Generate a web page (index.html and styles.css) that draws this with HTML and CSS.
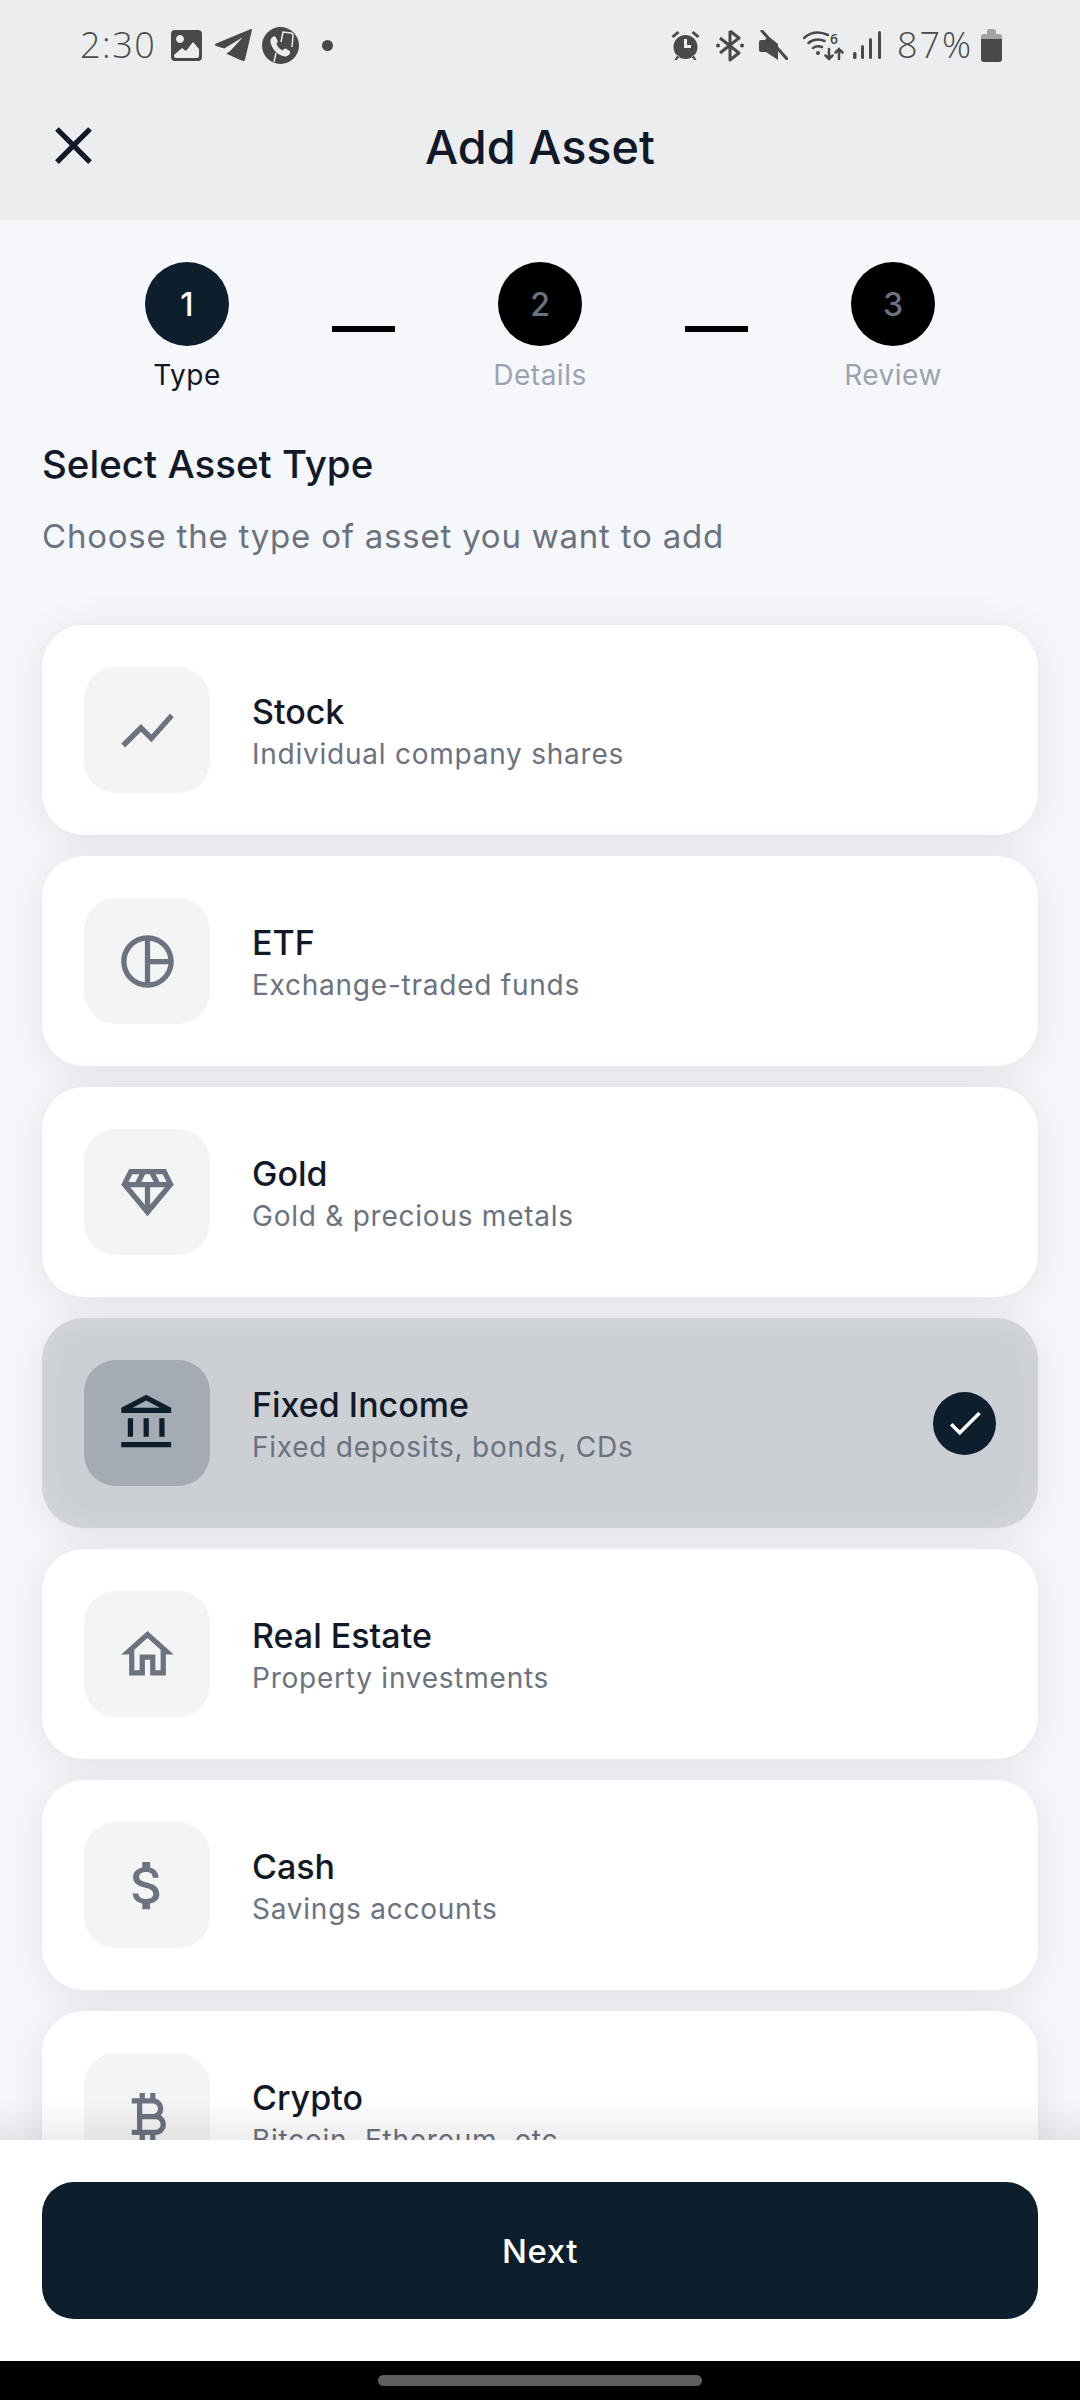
FILE: index.html
```html
<!DOCTYPE html>
<html lang="en">
<head>
<meta charset="utf-8">
<link rel="stylesheet" href="styles.css">
</head>
<body>
<div class="app">
  <header class="top">
    <div class="status">
      <div class="status-left">
        <span class="clock">2:30</span>
        <svg class="si s-img" viewBox="0 0 31 31"><path fill-rule="evenodd" d="M4 0h23a4 4 0 0 1 4 4v23a4 4 0 0 1-4 4H4a4 4 0 0 1-4-4V4a4 4 0 0 1 4-4zM3 26a2 2 0 0 0 2 2h21a2 2 0 0 0 2-2v-7l-6-7-7 9-4-3-8 7zM9 5a4 4 0 1 0 .01 0z"/></svg>
        <svg class="si s-tg" viewBox="0 0 36 31"><path d="M35 0 1 14c-1.500.6-1.300 2 0 2.500L9 19 27 8 15 21l-4 3 16 7c1 .3 2-.2 2.200-1.300L36 1c0-.8-.4-1.200-1-1z"/></svg>
        <svg class="si s-wa" viewBox="0 0 37 37"><circle cx="18.500" cy="18.500" r="18.500"/><path class="cut" d="M11 10c-2.500 1-3 4-2 7 2 6 6 10 12 12 3 1 6 0 7-3 .3-1 0-2-1-2.500l-3.500-2c-1-.5-2 1.500-3 2-3-1.500-5-3.500-6-6.500 0-1 1.500-2 1.200-3l-2-4c-.5-1-1.500-1-2.700-.5z"/><path class="cut-line" d="M19 15l2-10 8 1c2 0 2 2 2 3l-1 11M12 35l2-9"/></svg>
        <span class="dot"></span>
      </div>
      <div class="status-right">
        <svg class="si s-alarm" viewBox="0 0 28 30"><path fill-rule="evenodd" d="M14 5a12 12 0 1 1 0 24 12 12 0 0 1 0-24zm-1.500 4v9h7v-3h-4V9zM0 6l6-5 2 2-6 5zM28 6l-6-5-2 2 6 5zM3 30l3-5 2 2-3 3zM25 30l-3-5-2 2 3 3z"/></svg>
        <svg class="si s-bt" viewBox="0 0 28 33"><path fill="none" stroke="currentColor" stroke-width="3" stroke-linejoin="round" d="M14 2v29l9-7L4 9M14 2l9 7L4 24"/><circle cx="2" cy="16.500" r="2"/><circle cx="26" cy="16.500" r="2"/></svg>
        <svg class="si s-mute" viewBox="0 0 29 30"><path d="M19 1v13L9 6 6 10H2a2 2 0 0 0-2 2v8a2 2 0 0 0 2 2h5l12 8v-8z"/><path fill="none" stroke="currentColor" stroke-width="3" stroke-linecap="round" d="M3 1l25 28"/></svg>
        <span class="wifi">
          <svg class="si s-wifi" viewBox="0 0 41 31"><g fill="none" stroke="currentColor" stroke-width="2.500" stroke-linecap="round"><path d="M1 8c7-6 15-7 24-3M5.500 13c5-4 10-4.500 16-2M10 18c3-2 6-2 9-1"/><path d="M26 19v10M22.500 25.500 26 29l3.500-3.500M36 29V19M32.500 22.500 36 19l3.500 3.500"/></g><circle cx="15" cy="23" r="2"/></svg>
          <span class="net">6</span>
        </span>
        <svg class="si s-sig" viewBox="0 0 28 30"><rect x="0" y="22" width="3.500" height="7" rx="1.500"/><rect x="8" y="15" width="3" height="14" rx="1.500"/><rect x="16" y="8" width="3" height="21" rx="1.500"/><rect x="25" y="1" width="3" height="28" rx="1.500"/></svg>
        <span class="pct">87%</span>
        <svg class="si s-bat" viewBox="0 0 21 33"><path class="bat-top" d="M6 2a2 2 0 0 1 2-2h5a2 2 0 0 1 2 2v3h3a3 3 0 0 1 3 3v2H0V8a3 3 0 0 1 3-3h3z"/><path d="M0 10h21v20a3 3 0 0 1-3 3H3a3 3 0 0 1-3-3z"/></svg>
      </div>
    </div>
    <div class="bar">
      <svg class="close" viewBox="0 0 24 24"><path d="M19 6.410 17.590 5 12 10.590 6.410 5 5 6.410 10.590 12 5 17.590 6.410 19 12 13.410 17.590 19 19 17.590 13.410 12z"/></svg>
      <h1 class="title">Add Asset</h1>
    </div>
  </header>

  <main class="content">
    <section class="stepper">
      <div class="step step-on"><span class="num">1</span><span class="lbl">Type</span></div>
      <span class="link"></span>
      <div class="step"><span class="num">2</span><span class="lbl">Details</span></div>
      <span class="link"></span>
      <div class="step"><span class="num">3</span><span class="lbl">Review</span></div>
    </section>
    <h2 class="heading">Select Asset Type</h2>
    <p class="lead">Choose the type of asset you want to add</p>
    <div class="list">
      <div class="card">
        <div class="ico"><svg viewBox="0 0 24 24"><path d="M3.500 18.490l6-6.010 4 4L22 6.920l-1.410-1.410-7.090 7.970-4-4L2 16.990z"/></svg></div>
        <div class="txt"><div class="name">Stock</div><div class="desc">Individual company shares</div></div>
      </div>
      <div class="card">
        <div class="ico"><svg viewBox="0 0 24 24"><path d="M12 2C6.490 2 2 6.490 2 12s4.490 10 10 10 10-4.490 10-10S17.510 2 12 2zm1 2.070c3.610.45 6.480 3.330 6.930 6.930H13V4.070zM4 12c0-4.060 3.070-7.440 7-7.930v15.870c-3.930-.5-7-3.880-7-7.940zm9 7.930V13h6.930c-.45 3.610-3.320 6.480-6.930 6.930z"/></svg></div>
        <div class="txt"><div class="name">ETF</div><div class="desc">Exchange-traded funds</div></div>
      </div>
      <div class="card">
        <div class="ico"><svg viewBox="0 0 24 24"><path d="M19 3H5L2 9l10 12L22 9l-3-6zM9.620 8l1.500-3h1.760l1.500 3H9.620zM11 10v6.680L5.440 10H11zm2 0h5.560L13 16.680V10zm6.260-2h-2.650l-1.500-3h2.650l1.500 3zM6.240 5h2.650l-1.500 3H4.740l1.500-3z"/></svg></div>
        <div class="txt"><div class="name">Gold</div><div class="desc">Gold &amp; precious metals</div></div>
      </div>
      <div class="card card-on">
        <div class="ico"><svg viewBox="0 0 24 24"><path d="M6.500 10h-2v7h2v-7zm6 0h-2v7h2v-7zm8.500 9H2v2h19v-2zm-2.500-9h-2v7h2v-7zm-7-6.740L16.710 6H6.290l5.210-2.740m0-2.260L2 6v2h19V6l-9.500-5z"/></svg></div>
        <div class="txt"><div class="name">Fixed Income</div><div class="desc">Fixed deposits, bonds, CDs</div></div>
        <span class="tick"><svg viewBox="0 0 24 24"><path d="M9 16.170 4.830 12l-1.410 1.410L9 19 21 7l-1.410-1.410z"/></svg></span>
      </div>
      <div class="card">
        <div class="ico"><svg viewBox="0 0 24 24"><path d="M12 5.690l5 4.500V18h-2v-6H9v6H7v-7.810l5-4.500M12 3 2 12h3v8h6v-6h2v6h6v-8h3L12 3z"/></svg></div>
        <div class="txt"><div class="name">Real Estate</div><div class="desc">Property investments</div></div>
      </div>
      <div class="card">
        <div class="ico"><svg viewBox="0 0 24 24"><path d="M11.800 10.900c-2.270-.59-3-1.200-3-2.150 0-1.090 1.010-1.850 2.700-1.850 1.780 0 2.440.85 2.500 2.100h2.210c-.07-1.720-1.120-3.300-3.210-3.810V3h-3v2.160c-1.940.42-3.500 1.680-3.500 3.610 0 2.310 1.910 3.460 4.700 4.130 2.500.6 3 1.480 3 2.410 0 .69-.49 1.790-2.700 1.790-2.060 0-2.870-.92-2.980-2.100h-2.200c.12 2.190 1.760 3.420 3.680 3.830V21h3v-2.150c1.950-.37 3.500-1.500 3.500-3.550 0-2.840-2.430-3.810-4.700-4.400z"/></svg></div>
        <div class="txt"><div class="name">Cash</div><div class="desc">Savings accounts</div></div>
      </div>
      <div class="card">
        <div class="ico"><svg viewBox="0 0 24 24"><path d="M17.060 11.570c.59-.69.94-1.590.94-2.570 0-1.860-1.270-3.430-3-3.870V3h-2v2h-2V3H9v2H6v2h2v10H6v2h3v2h2v-2h2v2h2v-2c2.210 0 4-1.790 4-4 0-1.450-.78-2.730-1.940-3.430zM10 7h4c1.100 0 2 .9 2 2s-.9 2-2 2h-4V7zm5 10h-5v-4h5c1.100 0 2 .9 2 2s-.9 2-2 2z"/></svg></div>
        <div class="txt"><div class="name">Crypto</div><div class="desc">Bitcoin, Ethereum, etc.</div></div>
      </div>
    </div>
    <div class="fade"></div>
  </main>

  <footer class="foot"><button class="next">Next</button></footer>
  <div class="navbar"><span class="pill"></span></div>
</div>
</body>
</html>
```
FILE: styles.css
```css
* { box-sizing: border-box; margin: 0; padding: 0; }
html, body { width: 1080px; height: 2400px; overflow: hidden; }
body { font-family: Inter, "Noto Sans", sans-serif; background: #000; }
.app { display: flex; flex-direction: column; height: 2400px; }

.top { height: 220px; flex: none; background: #ECEDEF; }
.status { height: 90px; display: flex; justify-content: space-between; align-items: center; color: #484A49; }
.status-left { display: flex; align-items: center; padding-left: 80px; }
.status-right { display: flex; align-items: center; padding-right: 78px; }
.si { display: block; fill: currentColor; flex: none; }
.s-img { width: 31px; height: 31px; margin-left: 19px; }
.s-tg { width: 37px; height: 32px; margin-left: 13px; }
.s-wa { width: 37px; height: 37px; margin-left: 10px; }
.cut { fill: #ECEDEF; }
.cut-line { fill: none; stroke: #ECEDEF; stroke-width: 1.500; }
.s-alarm { width: 29px; height: 30px; }
.s-bt { width: 28px; height: 33px; margin-left: 16px; }
.s-mute { width: 29px; height: 30px; margin-left: 15px; }
.wifi { display: block; position: relative; width: 41px; height: 31px; margin-left: 15px; flex: none; }
.s-wifi { width: 41px; height: 31px; }
.net { position: absolute; left: 27px; top: 1px; font: 600 14px/16px "Open Sans", sans-serif; color: #484A49; }
.s-sig { width: 28px; height: 30px; margin-left: 9px; }
.s-bat { width: 21px; height: 33px; margin-left: 9px; }
.bat-top { opacity: .45; }
.clock, .pct { font-family: "Open Sans", sans-serif; font-weight: 300; font-size: 36px; line-height: 40px; color: #484A49; }
.clock { width: 72px; letter-spacing: 1.500px; }
.pct { width: 75px; margin-left: 16px; letter-spacing: 2px; white-space: nowrap; }
.dot { width: 11px; height: 11px; border-radius: 50%; background: #484A49; margin-left: 23px; }

.bar { height: 130px; display: flex; align-items: center; justify-content: center; position: relative; }
.close { position: absolute; left: 42px; top: 24px; width: 63px; height: 63px; fill: #111827; }
.title { font-size: 46.800px; font-weight: 500; color: #111827; line-height: 56px; margin-top: -16px; }

.content { flex: 1; min-height: 0; overflow: hidden; position: relative; background: #F6F7FB; }
.stepper { display: flex; justify-content: center; align-items: flex-start; padding-top: 42px; }
.step { width: 170px; display: flex; flex-direction: column; align-items: center; }
.num { width: 84px; height: 84px; border-radius: 50%; background: #000; color: #6B7280; display: flex; align-items: center; justify-content: center; font-size: 32px; font-weight: 500; }
.lbl { margin-top: 13px; font-size: 28px; line-height: 32px; color: #9CA3AF; letter-spacing: .5px; }
.step-on .num { background: #0D1E2D; color: #fff; }
.step-on .lbl { color: #111827; }
.link { width: 63px; height: 6px; margin: 64px 60px 0; background: #000; flex: none; }
.heading { margin: 51px 42px 0; font-size: 38.500px; line-height: 44px; font-weight: 500; color: #111827; }
.lead { margin: 30px 42px 0; font-size: 33px; line-height: 40px; color: #6B7280; letter-spacing: .78px; }

.list { display: flex; flex-direction: column; gap: 21px; padding: 0 42px; margin-top: 69px; }
.card { height: 210px; flex: none; display: flex; align-items: center; gap: 42px; padding: 0 42px; border-radius: 42px; background: #fff; box-shadow: 0 5px 40px rgba(0, 0, 0, .09); }
.ico { width: 126px; height: 126px; flex: none; border-radius: 32px; background: #F4F4F5; display: flex; align-items: center; justify-content: center; }
.ico svg { width: 63px; height: 63px; fill: #6B7280; display: block; }
.txt { flex: 1; min-width: 0; padding-top: 2px; }
.name { font-size: 34px; line-height: 42px; font-weight: 500; color: #111827; }
.desc { margin-top: 3px; font-size: 28px; line-height: 36px; color: #6B7280; letter-spacing: .76px; }
.card-on { background: #CCCFD3; box-shadow: 0 5px 40px rgba(0, 0, 0, .09), inset 0 0 30px rgba(255, 255, 255, .2); }
.card-on .ico { background: #A5ABB3; }
.card-on .ico svg { fill: #0D1E2D; }
.tick { width: 63px; height: 63px; border-radius: 50%; background: #0D1E2D; display: flex; align-items: center; justify-content: center; flex: none; }
.tick svg { width: 42px; height: 42px; fill: #fff; display: block; }
.fade { position: absolute; left: 0; right: 0; bottom: 0; height: 40px; background: linear-gradient(rgba(0, 0, 0, 0), rgba(0, 0, 0, .07)); }

.foot { height: 221px; flex: none; background: #fff; padding: 42px; }
.next { display: block; width: 100%; height: 137px; border: 0; border-radius: 32px; background: #0D1E2D; color: #fff; font-family: inherit; font-size: 33px; font-weight: 500; letter-spacing: .5px; }
.navbar { height: 39px; flex: none; background: #000; display: flex; justify-content: center; padding-top: 14px; }
.pill { width: 324px; height: 11px; border-radius: 6px; background: #5F5F5F; }
```
